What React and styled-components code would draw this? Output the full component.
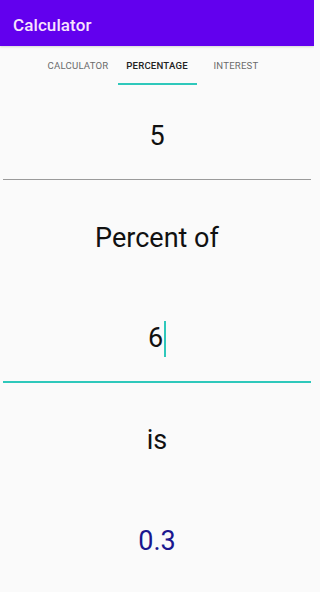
import React from "react";
import styled, { createGlobalStyle } from "styled-components";

const Global = createGlobalStyle`
  html, body { margin: 0; padding: 0; background: #fafafa; }
  body { font-family: Roboto, "Liberation Sans", sans-serif; }
  * { box-sizing: border-box; }
`;

const Screen = styled.div`
  width: 314px;
  height: 592px;
  display: flex;
  flex-direction: column;
  background: #fafafa;
  overflow: hidden;
`;

const AppBar = styled.header`
  height: 46px;
  background: #6200ee;
  display: flex;
  align-items: center;
  padding: 4px 13px 0;
  box-shadow: 0 1px 2px rgba(0,0,0,0.15);
`;

const Title = styled.h1`
  margin: 0;
  font-size: 17px;
  font-weight: 500;
  color: #f7e4fc;
  letter-spacing: 0.1px;
`;

const TabBar = styled.nav`
  height: 39px;
  display: flex;
  justify-content: center;
`;

const Tab = styled.div`
  width: 79px;
  display: flex;
  align-items: center;
  justify-content: center;
  font-size: 9.6px;
  font-weight: ${p => (p.$active ? 500 : 400)};
  letter-spacing: 0.2px;
  color: ${p => (p.$active ? "#222" : "#6b6b6b")};
  border-bottom: 2px solid ${p => (p.$active ? "#2ec8bb" : "transparent")};
  padding-top: 2px;
`;

const Content = styled.main`
  display: grid;
  grid-template-rows: repeat(5, 101px);
`;

const Label = styled.div`
  display: flex;
  align-items: center;
  justify-content: center;
  padding-top: 2px;
  font-size: 27px;
  color: ${p => p.$color || "#111"};
`;

const Field = styled.div`
  display: flex;
  flex-direction: column;
  padding: 0 3px ${p => (p.$focused ? "5px" : "6px")};
`;

const Value = styled.div`
  flex: 1;
  display: flex;
  align-items: center;
  justify-content: center;
  padding-top: 8px;
  font-size: 27px;
  color: #111;
  border-bottom: ${p => (p.$focused ? "2px solid #2ec8bb" : "1px solid #9a9a9a")};
`;

const Caret = styled.span`
  display: inline-block;
  width: 2px;
  height: 36px;
  background: #2ec8bb;
  margin-left: 1px;
  margin-top: 2px;
`;

export default function App() {
  return (
    <>
      <Global />
      <Screen>
        <AppBar>
          <Title>Calculator</Title>
        </AppBar>
        <TabBar>
          <Tab>CALCULATOR</Tab>
          <Tab $active>PERCENTAGE</Tab>
          <Tab>INTEREST</Tab>
        </TabBar>
        <Content>
          <Field>
            <Value>5</Value>
          </Field>
          <Label>Percent of</Label>
          <Field $focused>
            <Value $focused>
              6<Caret />
            </Value>
          </Field>
          <Label>is</Label>
          <Label $color="#1a178f">0.3</Label>
        </Content>
      </Screen>
    </>
  );
}
